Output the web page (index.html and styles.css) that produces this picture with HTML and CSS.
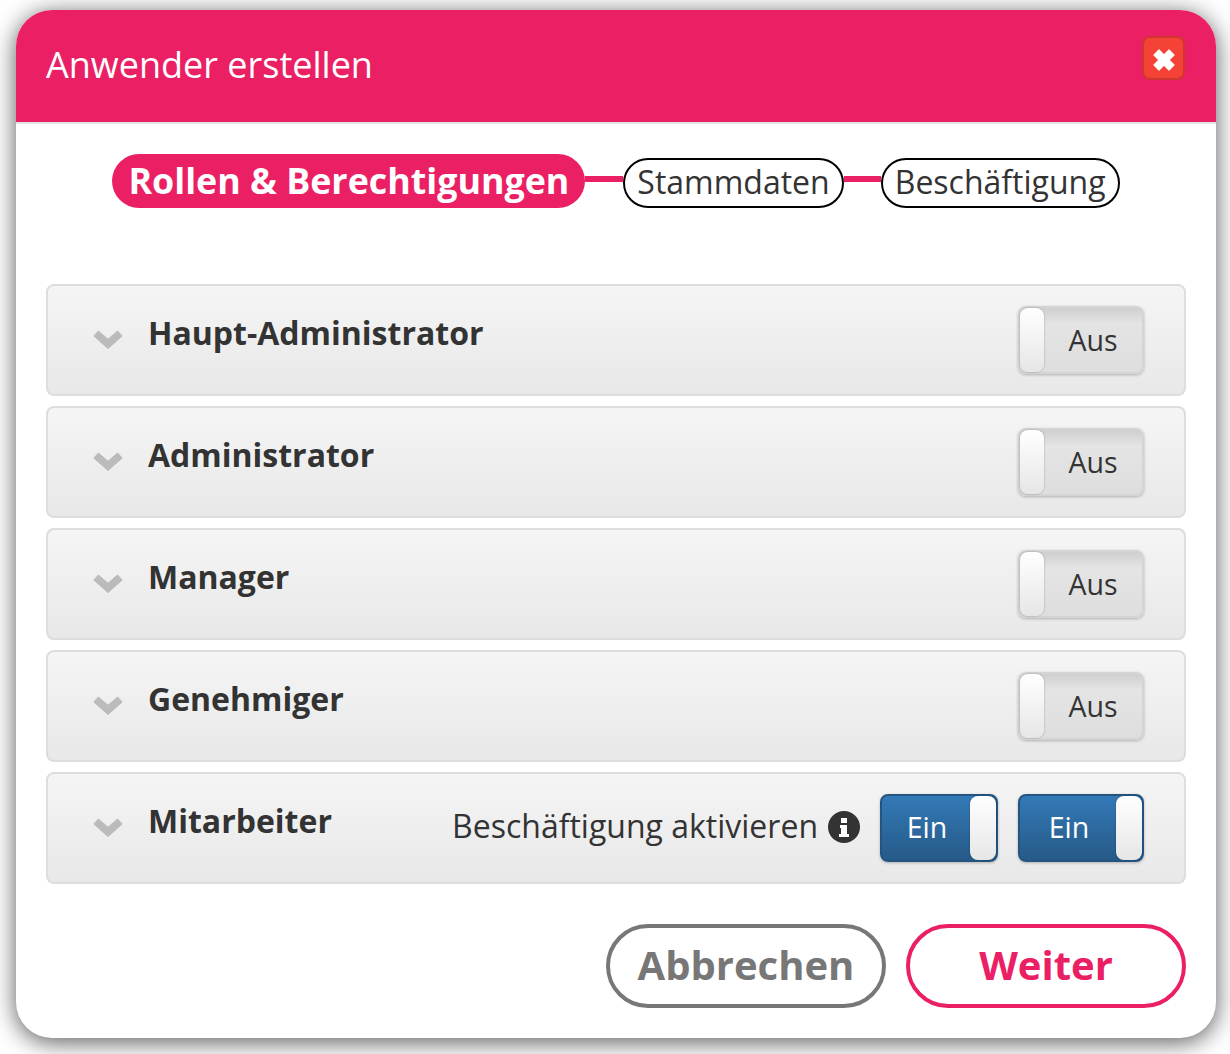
FILE: index.html
```html
<!DOCTYPE html>
<html lang="de">
<head>
<meta charset="utf-8">
<title>Anwender erstellen</title>
<link rel="stylesheet" href="styles.css">
</head>
<body>
<div class="modal">
  <header class="modal-head">
    <h1 class="modal-title">Anwender erstellen</h1>
    <button class="close" type="button" aria-label="Schließen">
      <svg viewBox="0 0 22 22" width="22" height="22"><path d="M6 1 11 6 16 1 21 6 16 11 21 16 16 21 11 16 6 21 1 16 6 11 1 6Z" fill="#fff" stroke="#fff" stroke-width="1.2" stroke-linejoin="round"/></svg>
    </button>
  </header>
  <div class="modal-body">
    <nav class="steps">
      <span class="step step-active">Rollen &amp; Berechtigungen</span>
      <span class="link link-a"></span>
      <span class="step">Stammdaten</span>
      <span class="link link-b"></span>
      <span class="step">Beschäftigung</span>
    </nav>
    <div class="panels">
      <section class="panel">
        <svg class="chev" viewBox="0 0 30 20" width="30" height="20"><path d="M0.8 7 5.4 2 15 10.2 24.6 2 29.2 7 15 19.6Z" fill="#bbb" stroke="#bbb" stroke-linejoin="round"/></svg>
        <h2 class="role">Haupt-Administrator</h2>
        <div class="switch switch-off"><span class="knob"></span><span class="switch-label">Aus</span></div>
      </section>
      <section class="panel">
        <svg class="chev" viewBox="0 0 30 20" width="30" height="20"><path d="M0.8 7 5.4 2 15 10.2 24.6 2 29.2 7 15 19.6Z" fill="#bbb" stroke="#bbb" stroke-linejoin="round"/></svg>
        <h2 class="role">Administrator</h2>
        <div class="switch switch-off"><span class="knob"></span><span class="switch-label">Aus</span></div>
      </section>
      <section class="panel">
        <svg class="chev" viewBox="0 0 30 20" width="30" height="20"><path d="M0.8 7 5.4 2 15 10.2 24.6 2 29.2 7 15 19.6Z" fill="#bbb" stroke="#bbb" stroke-linejoin="round"/></svg>
        <h2 class="role">Manager</h2>
        <div class="switch switch-off"><span class="knob"></span><span class="switch-label">Aus</span></div>
      </section>
      <section class="panel">
        <svg class="chev" viewBox="0 0 30 20" width="30" height="20"><path d="M0.8 7 5.4 2 15 10.2 24.6 2 29.2 7 15 19.6Z" fill="#bbb" stroke="#bbb" stroke-linejoin="round"/></svg>
        <h2 class="role">Genehmiger</h2>
        <div class="switch switch-off"><span class="knob"></span><span class="switch-label">Aus</span></div>
      </section>
      <section class="panel">
        <svg class="chev" viewBox="0 0 30 20" width="30" height="20"><path d="M0.8 7 5.4 2 15 10.2 24.6 2 29.2 7 15 19.6Z" fill="#bbb" stroke="#bbb" stroke-linejoin="round"/></svg>
        <h2 class="role">Mitarbeiter</h2>
        <span class="extra">Beschäftigung aktivieren</span>
        <svg class="info" viewBox="0 0 32 32" width="32" height="32"><circle cx="16" cy="16" r="16" fill="#333"/><path d="M13 7h6v5h-6zM12 14h7v9h2v3H11v-3h2v-6h-1z" fill="#fff"/></svg>
        <div class="switch switch-on switch-narrow"><span class="switch-label">Ein</span><span class="knob"></span></div>
        <div class="switch switch-on"><span class="switch-label">Ein</span><span class="knob"></span></div>
      </section>
    </div>
    <footer class="actions">
      <button class="btn btn-cancel" type="button">Abbrechen</button>
      <button class="btn btn-next" type="button">Weiter</button>
    </footer>
  </div>
</div>
</body>
</html>
```
FILE: styles.css
```css
* { box-sizing: border-box; }
html, body { margin: 0; height: 100%; overflow: hidden; background: #fff; }
body { padding: 10px 14px 16px 16px; font-family: "Open Sans", "Noto Sans", sans-serif; color: #333; }
.modal { width: 1200px; height: 1028px; background: #fff; border-radius: 36px; box-shadow: 0 4px 25px rgba(0,0,0,.66); overflow: hidden; display: flex; flex-direction: column; }
.modal-head { height: 114px; flex: none; background: #eb2064; border-bottom: 2px solid #e5e5e5; padding: 0 30px; display: flex; justify-content: space-between; }
.modal-title { margin: 0; padding-top: 31px; font-size: 36px; line-height: 48px; font-weight: 400; color: #fff; }
.close { width: 43px; height: 44px; margin-top: 26px; margin-right: 1px; padding: 4px 0 0; border: 2px solid #d1352f; border-radius: 8px; background: #f44336; display: flex; align-items: center; justify-content: center; }
.modal-body { flex: 1; padding: 30px 30px 30px; display: flex; flex-direction: column; }
.steps { display: flex; align-items: flex-end; justify-content: center; height: 54px; }
.step { height: 50px; padding: 0 12px; border: 2px solid #000; border-radius: 25px; font-size: 32px; line-height: 44px; white-space: nowrap; background: #fff; color: #333; }
.step-active { height: 54px; padding: 0 16px; border: 0; border-radius: 27px; background: #eb2064; color: #fff; font-weight: 700; font-size: 35.8px; line-height: 52px; }
.link { height: 6px; margin-bottom: 26px; background: #eb2064; }
.link-a { width: 38px; }
.link-b { width: 37px; }
.panels { margin-top: 76px; display: flex; flex-direction: column; gap: 10px; }
.panel { height: 112px; padding: 20px 40px 0 45px; border: 2px solid #ddd; border-radius: 8px; background: linear-gradient(#f5f5f5, #e8e8e8); display: flex; align-items: flex-start; }
.chev { flex: none; margin-top: 23px; }
.role { margin: 0 0 0 25px; font-size: 32px; line-height: 54px; font-weight: 700; color: #333; flex: 1; }
.extra { font-size: 32px; line-height: 64px; color: #333; margin-right: 10px; }
.info { flex: none; margin: 17px 20px 0 0; }
.switch { flex: none; width: 126px; height: 68px; border-radius: 8px; display: flex; align-items: center; box-shadow: 0 1px 3px rgba(0,0,0,.25); }
.switch-narrow { width: 118px; margin-right: 20px; }
.switch-off { background: linear-gradient(#cfcfcf, #e4e4e4 25%, #dedede); border: 2px solid #d4d4d4; }
.switch-on { background: linear-gradient(#337ab7, #265a88); border: 2px solid #245580; }
.knob { flex: none; width: 24px; height: 64px; border-radius: 8px; background: linear-gradient(#fff, #e6e6e6); box-shadow: 0 0 2px rgba(0,0,0,.35); }
.switch-label { flex: 1; text-align: center; font-size: 28.5px; line-height: 38px; }
.switch-off .switch-label { color: #333; padding-bottom: 1px; }
.switch-on .switch-label { color: #fff; padding: 0 0 2px 2px; }
.switch-on .knob { width: 26px; }
.actions { margin-top: 40px; display: flex; justify-content: flex-end; gap: 20px; }
.btn { width: 280px; height: 84px; border-radius: 42px; background: #fff; font-family: inherit; font-size: 40px; font-weight: 700; padding: 0 0 4px; }
.btn-cancel { border: 4px solid #777; color: #777; }
.btn-next { border: 4px solid #eb2064; color: #eb2064; }
```
